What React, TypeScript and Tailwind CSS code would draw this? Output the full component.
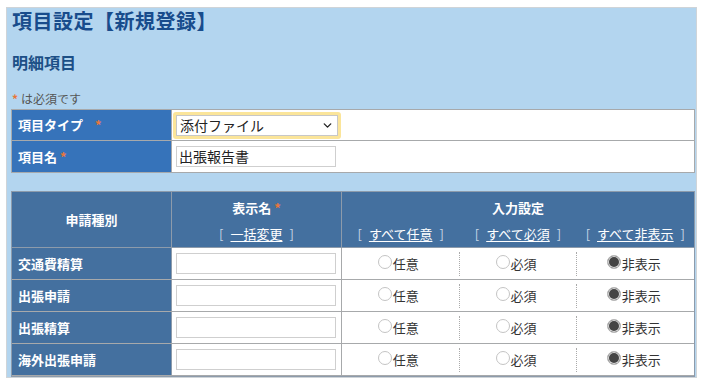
import { ChevronDown } from 'lucide-react'

const font = { fontFamily: '"Noto Sans CJK JP", "Noto Sans", sans-serif' }

const rows = ['交通費精算', '出張申請', '出張精算', '海外出張申請']

function Req() {
  return <span className="text-[#e8763a] text-[13px] font-bold ml-[3px]">*</span>
}

function Radio({ checked, label }: { checked?: boolean; label: string }) {
  return (
    <div className="flex items-center text-[13px] text-[#333]">
      {checked ? (
        <span className="w-[14px] h-[14px] rounded-full border border-[#bbb] bg-[#444] shadow-[inset_0_0_0_1px_#ddd] mt-[-3px]" />
      ) : (
        <span className="w-[14px] h-[14px] rounded-full border border-[#c4c4c4] bg-white mt-[-3px]" />
      )}
      <span className="ml-[1px]">{label}</span>
    </div>
  )
}

function BulkLink({ text }: { text: string }) {
  return (
    <span className="text-[13px] font-normal">
      <span className="text-[#c9d6e6]">[</span>
      <span className="underline underline-offset-2 mx-[7px]">{text}</span>
      <span className="text-[#c9d6e6]">]</span>
    </span>
  )
}

export default function App() {
  return (
    <div className="w-[708px] h-[389px] bg-white pt-[7px] pl-[6px]" style={font}>
      <div className="w-[691px] h-[371px] bg-[#b3d5ef] border border-[#cfd4d8] overflow-hidden pl-[4px]">
        <h1 className="text-[20px] leading-[26px] font-bold text-[#184c8c] pl-[1px] tracking-[0.5px]">項目設定【新規登録】</h1>
        <h2 className="mt-[18px] text-[16px] leading-[20px] font-bold text-[#1c4f86] pl-[1px]">明細項目</h2>
        <p className="mt-[19px] text-[12px] leading-[16px] text-[#555] pl-[1px]">
          <span className="text-[#e8763a] text-[12px] font-bold mr-[3px]">*</span>は必須です
        </p>

        <div className="mt-[2px] w-[684px] border border-[#a7a9ab] bg-white">
          <div className="flex h-[31px] border-b border-[#a7a9ab]">
            <div className="w-[160px] bg-[#3673ba] border-r border-[#a7a9ab] text-white font-bold text-[13px] flex items-center pl-[6px]">
              項目タイプ<span className="ml-[9px]"><Req /></span>
            </div>
            <div className="flex items-center pl-[1px]">
              <div className="w-[168px] h-[27px] rounded-[3px] bg-[#fbe59a] p-[3px]">
                <div className="h-full bg-white border border-[#c7c7c7] flex items-center justify-between px-[3px] text-[14px] text-[#222]">
                  <span>添付ファイル</span>
                  <ChevronDown size={13} strokeWidth={2.5} className="text-[#222]" />
                </div>
              </div>
            </div>
          </div>
          <div className="flex h-[31px]">
            <div className="w-[160px] bg-[#3673ba] border-r border-[#a7a9ab] text-white font-bold text-[13px] flex items-center pl-[6px]">
              項目名<Req />
            </div>
            <div className="flex items-center pl-[4px]">
              <div className="w-[160px] h-[21px] border border-[#cfcfcf] flex items-center px-[2px] text-[14px] text-[#222]">出張報告書</div>
            </div>
          </div>
        </div>

        <div className="mt-[18px] w-[684px] border border-[#8d9bab] bg-white">
          <div className="flex h-[56px] bg-[#44709f] text-white text-[13px] font-bold border-b border-[#8d9bab]">
            <div className="w-[160px] border-r border-[#8d9bab] flex items-center justify-center">申請種別</div>
            <div className="w-[170px] border-r border-[#8d9bab] flex flex-col items-center justify-center gap-[6px] pt-[2px]">
              <div>表示名<Req /></div>
              <BulkLink text="一括変更" />
            </div>
            <div className="flex-1 flex flex-col items-center justify-center gap-[6px] pt-[2px]">
              <div>入力設定</div>
              <div className="flex w-full">
                <div className="flex-1 flex justify-center"><BulkLink text="すべて任意" /></div>
                <div className="flex-1 flex justify-center"><BulkLink text="すべて必須" /></div>
                <div className="flex-1 flex justify-center"><BulkLink text="すべて非表示" /></div>
              </div>
            </div>
          </div>
          {rows.map(r => (
            <div key={r} className="flex h-[32px] border-b border-[#a7a9ab]">
              <div className="w-[160px] bg-[#44709f] border-r border-[#8d9bab] text-white font-bold text-[13px] flex items-center pl-[6px]">{r}</div>
              <div className="w-[170px] border-r border-[#a7a9ab] flex items-center pl-[4px]">
                <div className="w-[160px] h-[21px] border border-[#cfcfcf]" />
              </div>
              <div className="flex-1 flex items-center">
                <div className="flex-1 flex justify-center pr-[4px]"><Radio label="任意" /></div>
                <div className="h-[24px] border-l border-dotted border-[#aaa]" />
                <div className="flex-1 flex justify-center pr-[4px]"><Radio label="必須" /></div>
                <div className="h-[24px] border-l border-dotted border-[#aaa]" />
                <div className="flex-1 flex justify-center pr-[4px]"><Radio checked label="非表示" /></div>
              </div>
            </div>
          ))}
        </div>
      </div>
    </div>
  )
}
